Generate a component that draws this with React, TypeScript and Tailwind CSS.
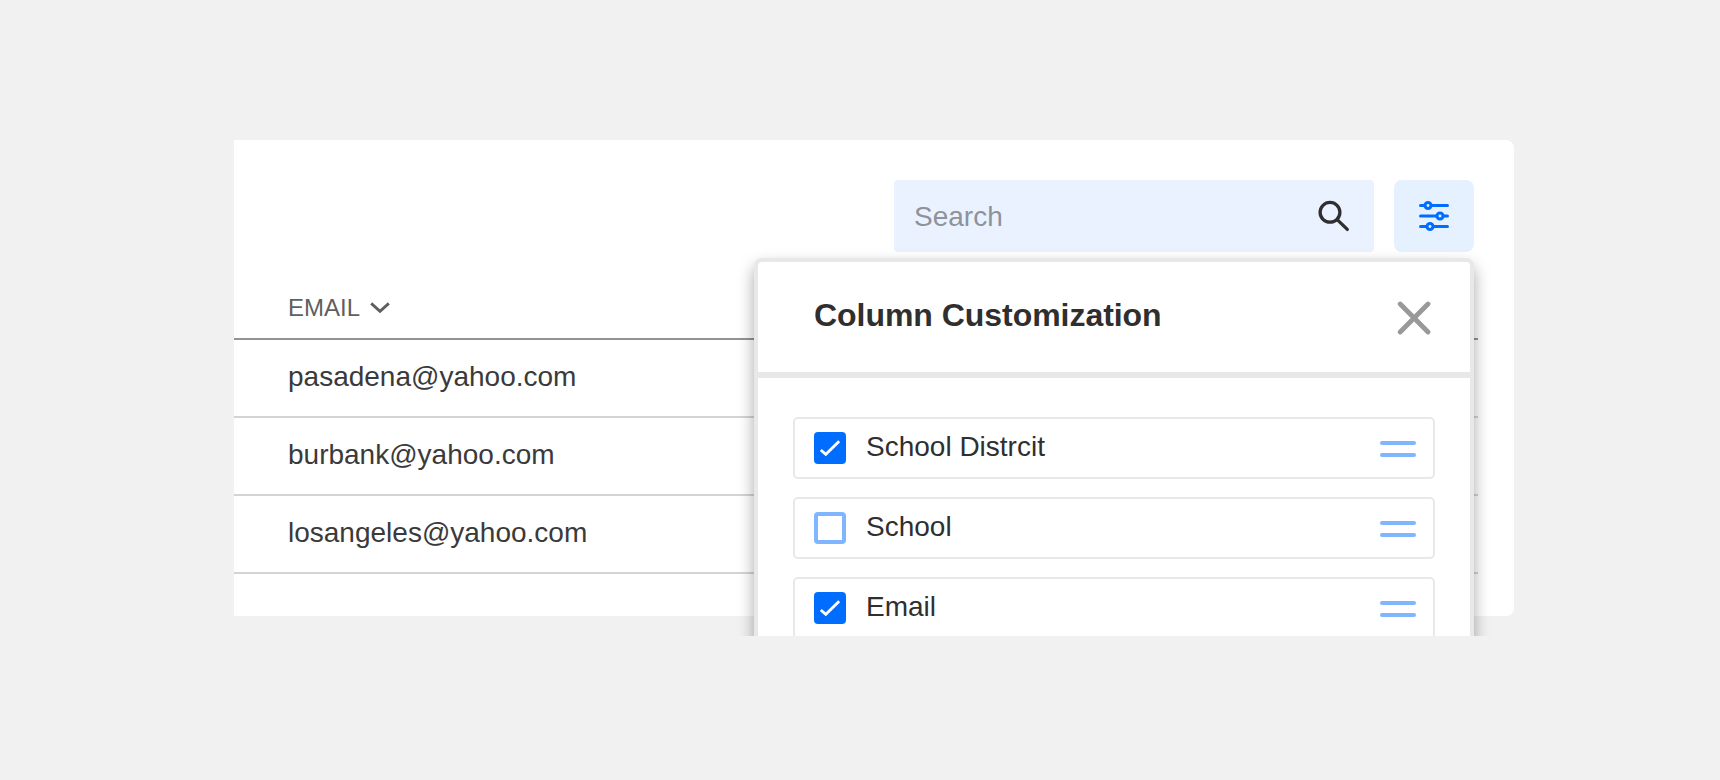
const emails = ["pasadena@yahoo.com", "burbank@yahoo.com", "losangeles@yahoo.com"];

const columns = [
  { label: "School Distrcit", checked: true },
  { label: "School", checked: false },
  { label: "Email", checked: true },
];

function SearchIcon() {
  return (
    <svg width="32" height="32" viewBox="0 0 32 32" fill="none" stroke="#2f2f2f" className="shrink-0">
      <circle cx="12" cy="12.3" r="9.9" strokeWidth="3.3" />
      <path d="M19.2 19.6L29.3 29.4" strokeWidth="3.3" strokeLinecap="round" />
    </svg>
  );
}

function SlidersIcon() {
  return (
    <svg width="30" height="32" viewBox="0 0 30 32" stroke="#006dff" strokeWidth="3.2" strokeLinecap="round">
      <path d="M1.6 5.5H28.4M1.6 16H28.4M1.6 26.5H28.4" />
      <circle cx="9" cy="5.5" r="3" fill="#e6f1ff" strokeWidth="3.1" />
      <circle cx="21" cy="16" r="3" fill="#e6f1ff" strokeWidth="3.1" />
      <circle cx="11" cy="26.5" r="3" fill="#e6f1ff" strokeWidth="3.1" />
    </svg>
  );
}

function Checkbox({ checked }: { checked: boolean }) {
  if (!checked) {
    return <span className="size-8 shrink-0 rounded border-4 border-[#80b5ff] bg-white" />;
  }
  return (
    <span className="size-8 shrink-0 rounded bg-[#006dff]">
      <svg width="32" height="32" viewBox="0 0 32 32" fill="none" stroke="white" strokeWidth="2.9">
        <path d="M6.8 18L11.8 22.3L25.2 9.2" strokeLinecap="butt" strokeLinejoin="miter" />
      </svg>
    </span>
  );
}

function ColumnItem({ label, checked }: { label: string; checked: boolean }) {
  return (
    <li className="flex h-[62px] shrink-0 items-center rounded-[5px] border-2 border-[#e8e8e8] bg-white pr-[17px] pl-[19px]">
      <Checkbox checked={checked} />
      <span className="ml-5 flex-1 pb-0.5 text-[28px] leading-8 text-[#2f2f2f]">{label}</span>
      <span className="flex flex-col gap-2 pt-0.5">
        <span className="h-1 w-9 rounded-full bg-[#80b5ff]" />
        <span className="h-1 w-9 rounded-full bg-[#80b5ff]" />
      </span>
    </li>
  );
}

function ColumnPanel() {
  return (
    <section className="absolute top-[118px] left-[754px] flex h-[600px] w-[720px] flex-col rounded-lg border-4 border-[#e8e8e8] bg-white shadow-[0_8px_16px_rgba(0,0,0,0.35)]">
      <header className="flex h-[116px] shrink-0 items-center justify-between border-b-6 border-[#e8e8e8] pr-[39px] pl-14">
        <h2 className="pb-1 text-[32px] leading-10 font-bold tracking-[-0.04px] text-[#2f2f2f]">Column Customization</h2>
        <svg width="34" height="34" viewBox="0 0 34 34" fill="none" stroke="#999999" strokeWidth="4.8" strokeLinecap="round" className="mt-0.5">
          <path d="M3.2 3L31 31M31 3L3.2 31" />
        </svg>
      </header>
      <ul className="flex flex-col gap-[18px] px-[35px] pt-[39px]">
        {columns.map((column) => (
          <ColumnItem key={column.label} {...column} />
        ))}
      </ul>
    </section>
  );
}

export default function App() {
  return (
    <main className="h-[780px] w-[1720px] bg-[#f1f1f1] pt-[140px] font-['Liberation_Sans',Arial,sans-serif]">
      <div className="relative h-[496px] overflow-hidden">
        <div className="ml-[234px] h-[476px] w-[1280px] rounded-r-lg bg-white pt-10">
          <div className="flex justify-end gap-5 pr-10">
            <label className="flex h-[72px] w-[480px] items-center justify-between rounded bg-[#eaf2ff] pr-6 pl-5">
              <span className="pt-0.5 text-[28px] leading-8 text-[#8e9299]">Search</span>
              <SearchIcon />
            </label>
            <button className="flex h-[72px] w-20 items-center justify-center rounded-lg bg-[#e6f1ff]">
              <SlidersIcon />
            </button>
          </div>
          <div className="mr-9 flex h-[88px] items-center border-b-2 border-[#939393] pt-[26px] pl-[54px] text-2xl text-[#5f5f5f]">
            EMAIL
            <svg width="20" height="12" viewBox="0 0 20 12" fill="none" stroke="#5f5f5f" strokeWidth="2.8" strokeLinecap="butt" className="ml-[10px]">
              <path d="M1.2 1.4L10 9.4L18.8 1.4" />
            </svg>
          </div>
          <ul className="mr-9">
            {emails.map((email) => (
              <li key={email} className="flex h-[78px] items-center border-b-2 border-[#d4d4d4] pb-0.5 pl-[54px] text-[28px] leading-8 text-[#3a3a3a]">
                {email}
              </li>
            ))}
          </ul>
        </div>
        <ColumnPanel />
      </div>
    </main>
  );
}
